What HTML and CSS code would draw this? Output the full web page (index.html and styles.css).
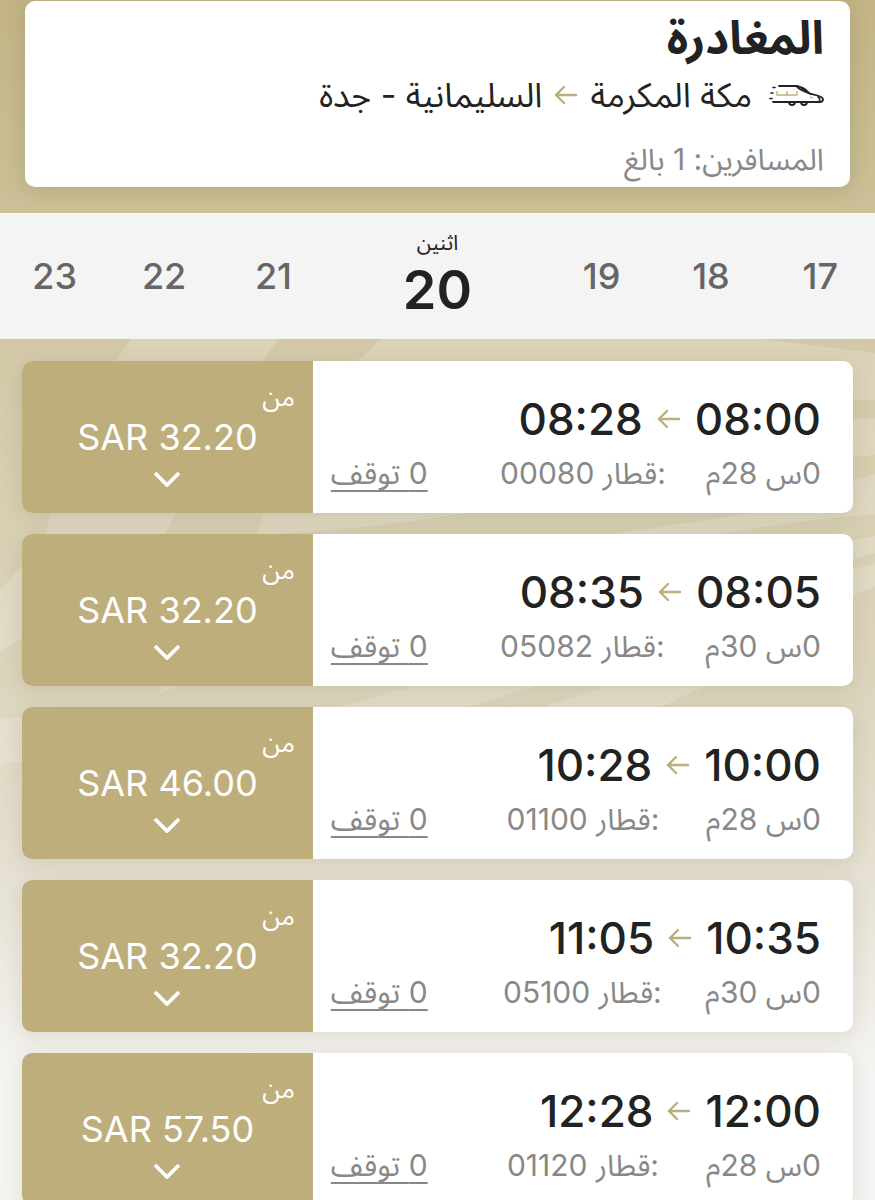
FILE: index.html
```html
<!DOCTYPE html>
<html lang="ar" dir="rtl">
<head>
  <meta charset="UTF-8">
  <meta name="viewport" content="width=device-width, initial-scale=1.0">
  <title>المغادرة</title>
  <link rel="stylesheet" href="styles.css">
</head>
<body>

  <!-- shared icons -->
  <svg class="sprite" aria-hidden="true">
    <symbol id="arrow" viewBox="0 0 24 20">
      <path d="M22 10H2M10 2L2 10l8 8" fill="none" stroke="currentColor" stroke-width="2.4" stroke-linecap="round" stroke-linejoin="round"/>
    </symbol>
    <symbol id="chevron" viewBox="0 0 28 16">
      <path d="M2 2l12 12L26 2" fill="none" stroke="currentColor" stroke-width="3.8"/>
    </symbol>
  </svg>

  <header class="top">
    <div class="summary">
      <h1>المغادرة</h1>
      <p class="route">
        <svg class="train" viewBox="0 0 56 22" aria-hidden="true">
          <g fill="none" stroke="#222" stroke-width="1.8" stroke-linecap="round">
            <path d="M11 2h18c5 1 9 6 14 8 5 1 11 2 12 5 0 2-1 3-3 3H39M33 18h-6M21 18H5"/>
            <path d="M28 2c3 4 9 6 15 8M33 3c4 1 6 4 9 7" stroke-width="1.5"/>
            <path d="M50 13c2 1 2 3 1 5" stroke-width="1.5"/>
            <path d="M21 18c0 4 6 4 6 0zM33 18c0 4 6 4 6 0z"/>
            <path d="M5 3.500h2M3 9h2M2 14.500h2" stroke-width="1.6"/>
          </g>
          <path d="M9 7v4h20V7M19 7v4M42 13l3 1" fill="none" stroke="#bdae7c" stroke-width="1.3"/>
        </svg>
        <span>مكة المكرمة</span>
        <svg class="arrow"><use href="#arrow"/></svg>
        <span>السليمانية - جدة</span>
      </p>
      <p class="passengers">المسافرين: 1 بالغ</p>
    </div>
  </header>

  <nav class="days">
    <button class="day">17</button>
    <button class="day">18</button>
    <button class="day">19</button>
    <button class="day active"><small>اثنين</small>20</button>
    <button class="day">21</button>
    <button class="day">22</button>
    <button class="day">23</button>
  </nav>

  <main class="trips">
    <svg class="pattern" viewBox="0 0 875 861" preserveAspectRatio="none" aria-hidden="true">
      <path d="M132 0H279Q215 80 175 174L165 195Q110 255 22 298L0 311V251Q30 215 45 195Q80 60 132 0z"/>
      <path d="M381 0H760L875 14V61Q600 66 430 100Q650 80 875 79V115Q640 140 460 174Q360 190 257 195Q290 80 381 0z"/>
      <path d="M875 134V174Q560 200 160 353L162 340Q400 280 605 195L745 174Q820 150 875 134z"/>
      <path d="M875 196V213Q700 260 530 347L460 368H330L408 347Q640 240 875 196z"/>
      <path d="M875 223V246Q770 285 702 347L655 368H537L600 347Q740 255 875 223z"/>
      <path d="M0 378Q100 365 200 400Q100 410 0 423z"/>
    </svg>

    <article class="trip">
      <div class="info">
        <div class="times"><time>08:00</time><svg class="arrow"><use href="#arrow"/></svg><time>08:28</time></div>
        <div class="meta"><span>0س 28م</span><span class="number">:قطار 00080</span><a href="#">0 توقف</a></div>
      </div>
      <button class="price"><small>من</small><span dir="ltr">SAR 32.20</span><svg class="chevron"><use href="#chevron"/></svg></button>
    </article>

    <article class="trip">
      <div class="info">
        <div class="times"><time>08:05</time><svg class="arrow"><use href="#arrow"/></svg><time>08:35</time></div>
        <div class="meta"><span>0س 30م</span><span class="number">:قطار 05082</span><a href="#">0 توقف</a></div>
      </div>
      <button class="price"><small>من</small><span dir="ltr">SAR 32.20</span><svg class="chevron"><use href="#chevron"/></svg></button>
    </article>

    <article class="trip">
      <div class="info">
        <div class="times"><time>10:00</time><svg class="arrow"><use href="#arrow"/></svg><time>10:28</time></div>
        <div class="meta"><span>0س 28م</span><span class="number">:قطار 01100</span><a href="#">0 توقف</a></div>
      </div>
      <button class="price"><small>من</small><span dir="ltr">SAR 46.00</span><svg class="chevron"><use href="#chevron"/></svg></button>
    </article>

    <article class="trip">
      <div class="info">
        <div class="times"><time>10:35</time><svg class="arrow"><use href="#arrow"/></svg><time>11:05</time></div>
        <div class="meta"><span>0س 30م</span><span class="number">:قطار 05100</span><a href="#">0 توقف</a></div>
      </div>
      <button class="price"><small>من</small><span dir="ltr">SAR 32.20</span><svg class="chevron"><use href="#chevron"/></svg></button>
    </article>

    <article class="trip">
      <div class="info">
        <div class="times"><time>12:00</time><svg class="arrow"><use href="#arrow"/></svg><time>12:28</time></div>
        <div class="meta"><span>0س 28م</span><span class="number">:قطار 01120</span><a href="#">0 توقف</a></div>
      </div>
      <button class="price"><small>من</small><span dir="ltr">SAR 57.50</span><svg class="chevron"><use href="#chevron"/></svg></button>
    </article>
  </main>

</body>
</html>
```
FILE: styles.css
```css
* {
  margin: 0;
  padding: 0;
  box-sizing: border-box;
}

body {
  font-family: Inter, "Noto Sans Arabic", "DejaVu Sans", sans-serif;
  color: #222;
  background-color: #f5f4f2;
}

button {
  border: none;
  background: none;
  color: inherit;
  font-family: inherit;
  cursor: pointer;
}

.sprite {
  position: absolute;
  width: 0;
  height: 0;
}

.arrow {
  width: 24px;
  height: 20px;
  color: #bdae7c;
}

/* header */
.top {
  padding: 1px 25px 26px;
  background: linear-gradient(#c2b486, #cbc097);
}

.summary {
  padding: 6px 26px 2px;
  background-color: #fff;
  border-radius: 10px;
  box-shadow: 0 4px 20px rgba(90, 80, 40, 0.2);
}

h1 {
  font-size: 46px;
  line-height: 60px;
  font-weight: 700;
}

.route {
  display: flex;
  align-items: center;
  gap: 12px;
  font-size: 34px;
  line-height: 56px;
}

.train {
  width: 56px;
  height: 22px;
  margin-left: 4px;
}

.passengers {
  padding-top: 10px;
  font-size: 30px;
  line-height: 52px;
  color: #888;
}

/* day picker */
.days {
  display: grid;
  grid-template-columns: 1fr 1fr 1fr 2fr 1fr 1fr 1fr;
  height: 126px;
  background-color: #f4f4f4;
}

.day {
  font-size: 36px;
  font-weight: 500;
  color: #666;
}

.day.active {
  padding-bottom: 6px;
  font-size: 54px;
  line-height: 60px;
  font-weight: 600;
  color: #222;
}

.day small {
  display: block;
  font-size: 21px;
  line-height: 34px;
  font-weight: 400;
}

/* trips */
.trips {
  position: relative;
  display: flex;
  flex-direction: column;
  gap: 21px;
  padding: 22px 22px 0;
  background: linear-gradient(#d3c9a8, #dcd5bd 40%, #e4dfd0 60%, #f5f4f2 85%);
}

.pattern {
  position: absolute;
  top: 0;
  left: 0;
  width: 100%;
  height: 100%;
  fill: rgba(255, 255, 255, 0.18);
}

.trip {
  position: relative;
  display: flex;
  height: 152px;
  background-color: #fff;
  border-radius: 10px;
  overflow: hidden;
  box-shadow: 0 4px 20px rgba(90, 80, 40, 0.14);
}

.info {
  flex: 1;
  padding: 28px 32px 0 18px;
}

.times {
  display: flex;
  align-items: center;
  gap: 14px;
  font-size: 44px;
  line-height: 60px;
  font-weight: 500;
}

.meta {
  display: flex;
  align-items: flex-start;
  font-size: 30px;
  line-height: 48px;
  color: #888;
}

.number {
  width: 170px;
  margin-right: 38px;
  text-align: center;
}

.meta a {
  margin-right: auto;
  color: inherit;
  text-decoration: underline;
  text-decoration-thickness: 2px;
  text-decoration-skip-ink: none;
  text-underline-offset: 6px;
}

.price {
  display: flex;
  flex-direction: column;
  align-items: center;
  width: 35%;
  padding: 18px 18px 0;
  background-color: #bdae7c;
  color: #fff;
  font-size: 36px;
  line-height: 44px;
}

.price small {
  align-self: flex-start;
  font-size: 26px;
  line-height: 36px;
}

.chevron {
  width: 28px;
  height: 16px;
  margin-top: 12px;
}
```
